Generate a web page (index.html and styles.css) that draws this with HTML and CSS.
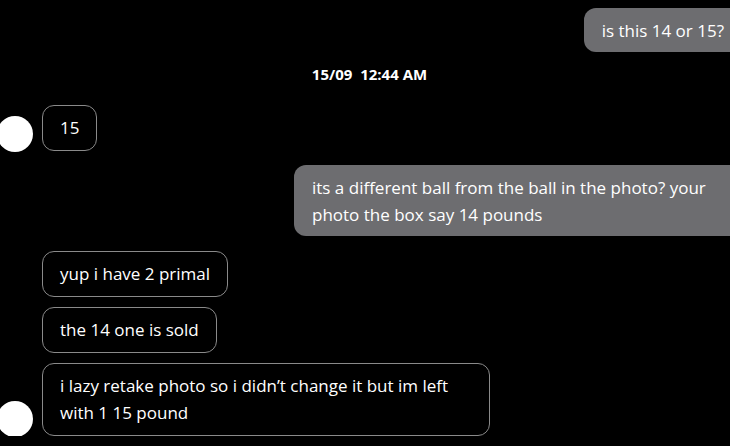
FILE: index.html
```html
<!DOCTYPE html>
<html lang="en">
<head>
  <meta charset="UTF-8">
  <title>Chat</title>
  <link rel="stylesheet" href="styles.css">
</head>
<body>
  <div class="thread">
    <div class="row out">
      <div class="bubble mine">is this 14 or 15?</div>
    </div>
    <div class="stamp">15/09&nbsp;&nbsp;12:44 AM</div>
    <div class="row in">
      <div class="avatar"></div>
      <div class="bubble theirs">15</div>
    </div>
    <div class="row out">
      <div class="bubble mine wide">its a different ball from the ball in the photo? your photo the box say 14 pounds</div>
    </div>
    <div class="group">
      <div class="row in">
        <div class="avatar hidden"></div>
        <div class="bubble theirs">yup i have 2 primal</div>
      </div>
      <div class="row in">
        <div class="avatar hidden"></div>
        <div class="bubble theirs">the 14 one is sold</div>
      </div>
      <div class="row in">
        <div class="avatar"></div>
        <div class="bubble theirs wide">i lazy retake photo so i didn&#8217;t change it but im left with 1 15 pound</div>
      </div>
    </div>
  </div>
</body>
</html>
```

FILE: styles.css
```css
html, body {
  margin: 0;
  background: #000;
  overflow: hidden;
}
body {
  font-family: "Open Sans", "Noto Sans", Arial, sans-serif;
  color: #fff;
  font-size: 17px;
}
.thread {
  display: flex;
  flex-direction: column;
  padding-top: 8px;
  margin-right: -12px;
  margin-left: -3px;
}
.row {
  display: flex;
  align-items: flex-end;
}
.row.out {
  justify-content: flex-end;
}
.row.in {
  gap: 9px;
}
.avatar {
  width: 36px;
  height: 36px;
  border-radius: 50%;
  background: #fff;
  flex: none;
  margin-bottom: -1px;
}
.avatar.hidden {
  visibility: hidden;
}
.bubble {
  line-height: 27px;
  padding: 9px 18px 8px;
  border-radius: 12px;
}
.mine {
  background: #6d6d70;
}
.theirs {
  border: 1px solid #8a8a8a;
  padding: 8px 17px 9px;
}
.wide {
  max-width: 412px;
}
.stamp {
  text-align: center;
  font-weight: 700;
  font-size: 15px;
  margin: 12px 0 21px;
}
.row.out:nth-child(4) {
  margin-top: 14px;
}
.group {
  display: flex;
  flex-direction: column;
  gap: 10px;
  margin-top: 15px;
}
```
